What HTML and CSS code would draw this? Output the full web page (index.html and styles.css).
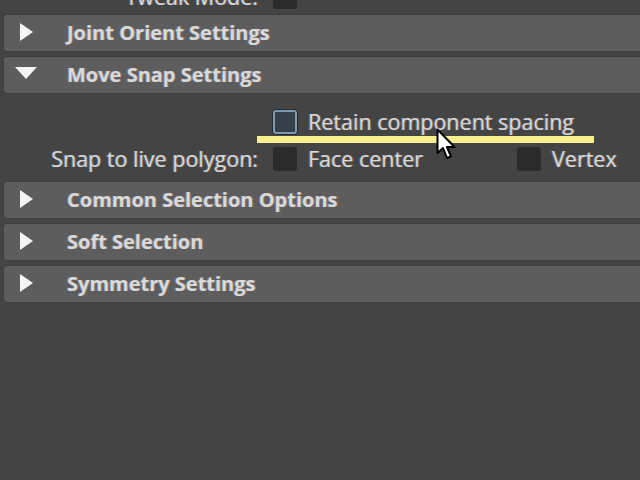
FILE: index.html
```html
<!DOCTYPE html>
<html lang="en">
<head>
  <meta charset="UTF-8" />
  <title>Move Tool Settings</title>
  <link rel="stylesheet" href="styles.css">
</head>
<body>

  <div class="settings">
    <div class="opt-row tweak">
      <span class="opt-label">Tweak Mode:</span>
      <span class="check"></span>
    </div>

    <div class="frame closed"><span class="arrow"></span>Joint Orient Settings</div>
    <div class="frame open"><span class="arrow"></span>Move Snap Settings</div>

    <div class="frame-body">
      <div class="opt-row">
        <span class="opt-label"></span>
        <span class="check active"></span>
        <span class="opt-text">Retain component spacing</span>
      </div>
      <div class="opt-row">
        <span class="opt-label">Snap to live polygon:</span>
        <span class="option">
          <span class="check"></span>
          <span class="opt-text">Face center</span>
        </span>
        <span class="option">
          <span class="check"></span>
          <span class="opt-text">Vertex</span>
        </span>
      </div>

      <div class="highlight"></div>
      <svg class="cursor" width="22" height="34" viewBox="0 0 22 34">
        <path d="M1.5 1.5 L1.5 25 L7 20 L11 30 L15 28.5 L11 19 L18.5 19 Z" fill="#fff" stroke="#000" stroke-width="2" stroke-linejoin="round"/>
      </svg>
    </div>

    <div class="frame closed"><span class="arrow"></span>Common Selection Options</div>
    <div class="frame closed"><span class="arrow"></span>Soft Selection</div>
    <div class="frame closed"><span class="arrow"></span>Symmetry Settings</div>
  </div>

</body>
</html>
```

FILE: styles.css
```css
* {
  margin: 0;
  padding: 0;
  box-sizing: border-box;
}

body {
  background-color: #444;
  font-family: "Open Sans", "DejaVu Sans", sans-serif;
  color: #d9d9d9;
  overflow: hidden;
  height: 480px;
}

.settings {
  text-shadow: -1px 0 rgba(110, 170, 255, 0.45), 1px 0 rgba(230, 150, 70, 0.45);
}

/* collapsible frame headers, running on past the right edge */
.frame {
  position: relative;
  height: 38px;
  margin: 0 0 4px 3px;
  padding-left: 63px;
  background-color: #5d5d5d;
  border: 1px solid #3e3e3e;
  border-right: none;
  border-radius: 4px 0 0 4px;
  font-size: 20px;
  font-weight: 700;
  line-height: 36px;
  white-space: nowrap;
}

.arrow {
  position: absolute;
  width: 0;
  height: 0;
}

.closed .arrow {
  left: 16px;
  top: 8px;
  border-top: 9px solid transparent;
  border-bottom: 9px solid transparent;
  border-left: 13px solid #f4f4f4;
}

.open .arrow {
  left: 11px;
  top: 10px;
  border-left: 11px solid transparent;
  border-right: 11px solid transparent;
  border-top: 12px solid #f4f4f4;
}

.frame-body {
  position: relative;
  padding: 9px 0 3px;
  margin-top: -4px;
  margin-bottom: 1px;
}

.opt-row {
  display: flex;
  align-items: center;
  height: 37px;
  font-size: 21.5px;
  white-space: nowrap;
}

.tweak {
  margin-top: -22px;
  margin-bottom: -1px;
}

.opt-label {
  width: 258px;
  flex: none;
  text-align: right;
  margin-right: 15px;
}

.check {
  width: 24px;
  height: 24px;
  flex: none;
  background-color: #2b2b2b;
  border-radius: 3px;
  margin-right: 11px;
}

.check.active {
  background-color: #36404a;
  border: 2px solid #7b9bb3;
  box-shadow: 0 0 0 1px #2a2a2a;
}

.option {
  display: flex;
  flex: none;
  align-items: center;
  width: 244px;
}

.option:last-child {
  width: auto;
}

.highlight {
  position: absolute;
  left: 257px;
  top: 42px;
  width: 337px;
  height: 7px;
  background-color: #f8f08e;
}

.cursor {
  position: absolute;
  left: 436px;
  top: 34px;
}
```
